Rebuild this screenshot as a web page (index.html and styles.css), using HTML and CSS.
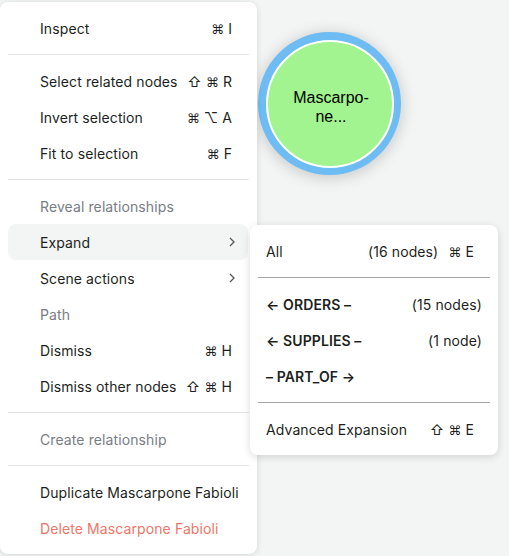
FILE: index.html
```html
<!DOCTYPE html>
<html>
<head>
<meta charset="utf-8">
<link rel="stylesheet" href="styles.css">
</head>
<body>
<div class="canvas">
  <div class="node">
    <div class="node-inner"><span class="node-label">Mascarpo-<br>ne...</span></div>
  </div>

  <div class="menu">
    <div class="item"><span>Inspect</span><span class="kbd"><span class="sym">⌘</span> I</span></div>
    <div class="sep"></div>
    <div class="item"><span>Select related nodes</span><span class="kbd">⇧ <span class="sym">⌘</span> R</span></div>
    <div class="item"><span>Invert selection</span><span class="kbd"><span class="sym">⌘</span> ⌥ A</span></div>
    <div class="item"><span>Fit to selection</span><span class="kbd"><span class="sym">⌘</span> F</span></div>
    <div class="sep"></div>
    <div class="item label"><span>Reveal relationships</span></div>
    <div class="item hover"><span>Expand</span><svg class="chev" width="8" height="12" viewBox="0 0 8 12"><path d="M2 2 L6 6 L2 10" fill="none" stroke="#55585c" stroke-width="1.3"/></svg></div>
    <div class="item"><span>Scene actions</span><svg class="chev" width="8" height="12" viewBox="0 0 8 12"><path d="M2 2 L6 6 L2 10" fill="none" stroke="#55585c" stroke-width="1.3"/></svg></div>
    <div class="item label"><span>Path</span></div>
    <div class="item"><span>Dismiss</span><span class="kbd"><span class="sym">⌘</span> H</span></div>
    <div class="item"><span>Dismiss other nodes</span><span class="kbd">⇧ <span class="sym">⌘</span> H</span></div>
    <div class="sep"></div>
    <div class="item label"><span>Create relationship</span></div>
    <div class="sep"></div>
    <div class="item"><span>Duplicate Mascarpone Fabioli</span></div>
    <div class="item danger"><span>Delete Mascarpone Fabioli</span></div>
  </div>

  <div class="submenu">
    <div class="sitem"><span>All</span><span class="right">(16 nodes)<span class="kbd2"><span class="sym">⌘</span> E</span></span></div>
    <div class="ssep"></div>
    <div class="sitem"><span class="rel">← ORDERS –</span><span class="count">(15 nodes)</span></div>
    <div class="sitem"><span class="rel">← SUPPLIES –</span><span class="count">(1 node)</span></div>
    <div class="sitem"><span class="rel">– PART_OF →</span></div>
    <div class="ssep"></div>
    <div class="sitem"><span>Advanced Expansion</span><span class="kbd2 solo">⇧ <span class="sym">⌘</span> E</span></div>
  </div>
</div>
</body>
</html>
```
FILE: styles.css
```css
html, body {
  margin: 0;
  padding: 0;
}
body {
  background: #f3f4f4;
  width: 509px;
  height: 556px;
  overflow: hidden;
  font-family: Inter, "Noto Sans", "DejaVu Sans", sans-serif;
  font-size: 14px;
  letter-spacing: 0.1px;
  color: #1d1f22;
}
.canvas {
  position: relative;
  width: 509px;
  height: 556px;
}
.node {
  position: absolute;
  left: 258px;
  top: 32px;
  width: 143px;
  height: 143px;
  border-radius: 50%;
  background: #6dbcf4;
  box-shadow: 0 2px 16px rgba(0,0,0,0.2);
  display: flex;
  align-items: center;
  justify-content: center;
}
.node-inner {
  width: 128px;
  height: 128px;
  border-radius: 50%;
  border: 2px solid #ffffff;
  box-sizing: border-box;
  background: #a1f48f;
  display: flex;
  align-items: center;
  justify-content: center;
}
.node-label {
  font-family: "Liberation Sans", Arial, sans-serif;
  font-size: 16px;
  line-height: 19px;
  letter-spacing: 0;
  color: #000;
  text-align: center;
  margin-top: 6px;
  margin-left: 3px;
}
.menu {
  position: absolute;
  left: 0;
  top: 2px;
  width: 257px;
  box-sizing: border-box;
  padding: 8px 0;
  background: #fff;
  border-radius: 8px;
  box-shadow: 0 1px 6px rgba(0,0,0,0.12);
  display: flex;
  flex-direction: column;
}
.item {
  height: 36px;
  margin: 0 9px 0 8px;
  padding: 0 16px 0 32px;
  display: flex;
  align-items: center;
  justify-content: space-between;
  border-radius: 8px;
  white-space: nowrap;
}
.item.hover {
  background: #f3f4f4;
}
.item.label {
  color: #797d83;
}
.item.danger {
  color: #ec7768;
}
.kbd {
  color: #1d1f22;
}
.sym {
  font-family: "DejaVu Sans", sans-serif;
  font-size: 13px;
}
.chev {
  margin-right: -4px;
}
.sep {
  height: 1px;
  background: #e3e4e6;
  margin: 8px 8px 8px 8px;
}
.submenu {
  position: absolute;
  left: 250px;
  top: 225px;
  width: 248px;
  box-sizing: border-box;
  padding: 8px 0;
  background: #fff;
  border-radius: 8px;
  box-shadow: 0 2px 8px rgba(0,0,0,0.14);
  display: flex;
  flex-direction: column;
}
.sitem {
  height: 36px;
  margin: 0 8px;
  padding: 0 8px;
  display: flex;
  align-items: center;
  justify-content: space-between;
  white-space: nowrap;
}
.rel {
  font-weight: 600;
}
.right {
  margin-right: 8px;
}
.kbd2 {
  margin-left: 10px;
}
.kbd2.solo {
  margin-right: 8px;
}
.ssep {
  height: 1px;
  background: #a4a7ab;
  margin: 8px 8px;
}
```
